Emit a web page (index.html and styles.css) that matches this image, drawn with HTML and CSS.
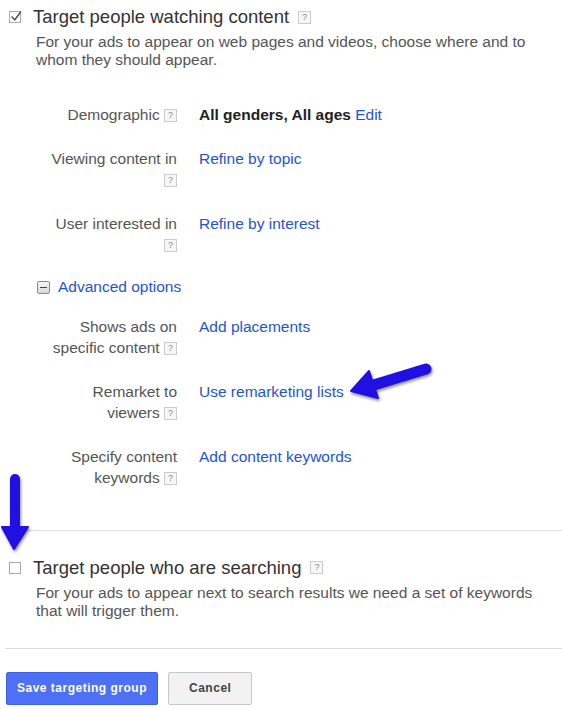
FILE: index.html
```html
<!DOCTYPE html>
<html>
<head>
<meta charset="utf-8">
<link rel="stylesheet" href="styles.css">
</head>
<body>
<div class="page">
  <section class="option">
    <div class="opt-head">
      <span class="cb"><svg class="check" viewBox="0 0 14 14" width="14" height="14"><path d="M2.5 7.5 L5.8 10.8 L12 2.5" fill="none" stroke="#555" stroke-width="1.5"/></svg></span>
      <span class="opt-title">Target people watching content</span>
      <span class="help">?</span>
    </div>
    <p class="opt-desc">For your ads to appear on web pages and videos, choose where and to whom they should appear.</p>

    <div class="targets">
      <div class="t-label">Demographic <span class="help">?</span></div>
      <div class="t-value"><b>All genders, All ages</b> <a href="#">Edit</a></div>

      <div class="t-label">Viewing content in <span class="help">?</span></div>
      <div class="t-value"><a href="#">Refine by topic</a></div>

      <div class="t-label">User interested in <span class="help">?</span></div>
      <div class="t-value"><a href="#">Refine by interest</a></div>
    </div>

    <div class="adv-toggle">
      <span class="minus"></span>
      <a href="#">Advanced options</a>
    </div>

    <div class="targets targets-adv">
      <div class="t-label">Shows ads on specific content <span class="help">?</span></div>
      <div class="t-value"><a href="#">Add placements</a></div>

      <div class="t-label">Remarket to viewers <span class="help">?</span></div>
      <div class="t-value"><a href="#">Use remarketing lists</a></div>

      <div class="t-label">Specify content keywords <span class="help">?</span></div>
      <div class="t-value"><a href="#">Add content keywords</a></div>
    </div>
  </section>

  <hr class="divider divider-first">

  <section class="option">
    <div class="opt-head">
      <span class="cb"></span>
      <span class="opt-title">Target people who are searching</span>
      <span class="help">?</span>
    </div>
    <p class="opt-desc">For your ads to appear next to search results we need a set of keywords that will trigger them.</p>
  </section>

  <hr class="divider divider-second">

  <div class="actions">
    <button class="btn btn-primary">Save targeting group</button>
    <button class="btn btn-secondary">Cancel</button>
  </div>

  <svg class="annotations" width="562" height="709" viewBox="0 0 562 709">
    <g class="arrow">
      <line x1="426" y1="369" x2="372" y2="385.5" stroke-width="11" stroke-linecap="round"/>
      <polygon points="351,391 369,371 378,398"/>
    </g>
    <g class="arrow">
      <line x1="15" y1="479" x2="15" y2="530" stroke-width="10" stroke-linecap="round"/>
      <polygon points="2,527 28,527 14,549"/>
    </g>
  </svg>
</div>
</body>
</html>
```

FILE: styles.css
```css
* { box-sizing: border-box; }

body {
  margin: 0;
  background: #fff;
  font-family: "Liberation Sans", Arial, Helvetica, sans-serif;
  font-size: 15.5px;
  color: #555;
}

.page {
  position: relative;
  width: 562px;
  min-height: 709px;
  padding-top: 6px;
}

a {
  color: #2553d6;
  text-decoration: none;
}

.opt-head {
  display: flex;
  align-items: center;
  height: 22px;
  padding-left: 9px;
}

.cb {
  position: relative;
  flex: none;
  width: 12px;
  height: 12px;
  border: 1px solid #aaa;
  background: #fff;
  margin-right: 12px;
}

.cb .check {
  position: absolute;
  left: -1px;
  top: -3px;
}

.opt-title {
  font-size: 18.5px;
  line-height: 22px;
  color: #333;
}

.opt-head .help {
  margin-left: 9px;
}

.help {
  display: inline-block;
  width: 13px;
  height: 13px;
  border: 1px solid #ccc;
  background: #f7f7f7;
  color: #888;
  font-size: 9px;
  line-height: 11px;
  text-align: center;
  vertical-align: middle;
  font-weight: normal;
}

.opt-desc {
  margin: 5px 0 0 36px;
  width: 516px;
  line-height: 18px;
  color: #555;
}

.targets {
  display: grid;
  grid-template-columns: 132px 1fr;
  column-gap: 22px;
  row-gap: 23px;
  padding-left: 45px;
  line-height: 21px;
  margin-top: 34.5px;
}

.targets-adv {
  margin-top: 18px;
}

.t-label {
  text-align: right;
  color: #555;
}

.t-value b {
  color: #222;
}

.adv-toggle {
  display: flex;
  align-items: center;
  gap: 8px;
  height: 21px;
  margin: 22px 0 0 37px;
}

.minus {
  position: relative;
  flex: none;
  width: 13px;
  height: 13px;
  border: 1px solid #8a8a8a;
  border-radius: 2px;
  background: linear-gradient(#f6f6f6, #d8d8d8);
}

.minus::after {
  content: "";
  position: absolute;
  left: 2px;
  right: 2px;
  top: 5px;
  height: 1px;
  background: #444;
}

.divider {
  border: 0;
  border-top: 1px solid #ddd;
  margin: 0 0 0 5px;
}

.divider-first {
  margin-top: 42px;
  margin-bottom: 26px;
}

.divider-second {
  margin-top: 28px;
}

.actions {
  display: flex;
  gap: 10px;
  margin: 23px 0 0 6px;
}

.btn {
  height: 33px;
  font-family: "Liberation Sans", Arial, sans-serif;
  font-size: 12px;
  font-weight: bold;
  letter-spacing: 0.5px;
  border-radius: 2px;
  cursor: pointer;
}

.btn-primary {
  padding: 0 10px;
  background: #4d70f4;
  border: 1px solid #3d60e6;
  color: #fff;
}

.btn-secondary {
  padding: 0 20px;
  background: #f2f2f2;
  border: 1px solid #c8c8c8;
  color: #444;
}

.annotations {
  position: absolute;
  left: 0;
  top: 0;
  pointer-events: none;
  filter: drop-shadow(1px 2px 1.5px rgba(0, 0, 0, 0.45));
}

.arrow line {
  stroke: #2110e2;
}

.arrow polygon {
  fill: #2110e2;
  stroke: #2110e2;
  stroke-width: 2;
  stroke-linejoin: round;
}
```
